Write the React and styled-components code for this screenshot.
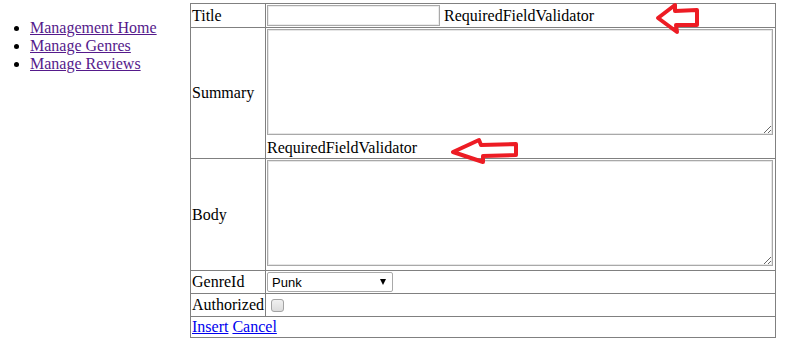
import React from "react";
import styled, { createGlobalStyle } from "styled-components";

const Global = createGlobalStyle`
  html, body { margin: 0; padding: 0; background: #fff; }
  body { font-family: "Liberation Serif", "Times New Roman", serif; font-size: 16px; color: #000; }
`;

const Page = styled.div`
  position: relative;
  display: flex;
  align-items: flex-start;
  padding-top: 3px;
  width: 785px;
  height: 346px;
`;

const Nav = styled.ul`
  width: 160px;
  margin: 16px 0 0;
  padding-left: 30px;
  line-height: 18px;
  list-style: disc;
`;

const NavLink = styled.a`
  color: #551a8b;
  text-decoration: underline;
`;

const Form = styled.table`
  border-collapse: collapse;
  border: 1px solid #808080;
  width: 586px;
`;

const Cell = styled.td`
  border: 1px solid #808080;
  padding: 1px;
  vertical-align: middle;
  line-height: 18px;
  width: ${(p) => (p.$label ? "72px" : "auto")};
`;

const Line = styled.div`
  display: flex;
  align-items: center;
  gap: ${(p) => p.$gap || 0}px;
  height: ${(p) => p.$h}px;
`;

const TextBox = styled.input`
  box-sizing: border-box;
  width: 173px;
  height: 21px;
  margin: 0;
  border: 1px solid #a9a9a9;
  box-shadow: inset 0 0 0 1px #ececec;
  font: 13px "Liberation Sans", Arial, sans-serif;
`;

const Area = styled.textarea`
  display: block;
  box-sizing: border-box;
  width: 506px;
  height: 106px;
  margin: 0 0 ${(p) => p.$after}px;
  border: 1px solid #a9a9a9;
  box-shadow: inset 0 0 0 1px #e6e6e6;
  font: 13px "Liberation Mono", monospace;
`;

const Validator = styled.span`
  display: block;
  line-height: 18px;
`;

const SelectWrap = styled.span`
  position: relative;
  display: inline-block;
  &::after {
    content: "";
    position: absolute;
    right: 7px;
    top: 7px;
    border-left: 3.5px solid transparent;
    border-right: 3.5px solid transparent;
    border-top: 6px solid #000;
    pointer-events: none;
  }
`;

const Select = styled.select`
  appearance: none;
  -webkit-appearance: none;
  box-sizing: border-box;
  width: 126px;
  height: 20px;
  margin: 0;
  padding: 0 0 0 4px;
  border: 1px solid #a9a9a9;
  border-radius: 2px;
  background: #fff;
  font: 13px "Liberation Sans", Arial, sans-serif;
  color: #000;
`;

const Check = styled.input`
  appearance: none;
  -webkit-appearance: none;
  width: 13px;
  height: 13px;
  margin: 3px 3px 3px 4px;
  border: 1px solid #a3a3a3;
  border-radius: 3px;
  background: linear-gradient(#f0f0f0, #dcdcdc);
`;

const Action = styled.a`
  color: #0000ee;
  text-decoration: underline;
`;

const Marker = styled.svg`
  position: absolute;
  left: ${(p) => p.$left}px;
  top: ${(p) => p.$top}px;
  overflow: visible;
  pointer-events: none;
  polygon {
    fill: none;
    stroke: #ed1c24;
    stroke-width: 4;
    stroke-linejoin: round;
  }
`;

export default function App() {
  return (
    <>
      <Global />
      <Page>
        <Nav>
          <li><NavLink href="#">Management Home</NavLink></li>
          <li><NavLink href="#">Manage Genres</NavLink></li>
          <li><NavLink href="#">Manage Reviews</NavLink></li>
        </Nav>
        <Form>
          <tbody>
            <tr>
              <Cell $label>Title</Cell>
              <Cell>
                <Line $h={21} $gap={4}>
                  <TextBox type="text" />
                  <span>RequiredFieldValidator</span>
                </Line>
              </Cell>
            </tr>
            <tr>
              <Cell $label>Summary</Cell>
              <Cell>
                <Area $after={4} />
                <Validator>RequiredFieldValidator</Validator>
              </Cell>
            </tr>
            <tr>
              <Cell $label>Body</Cell>
              <Cell>
                <Area $after={3} />
              </Cell>
            </tr>
            <tr>
              <Cell $label>GenreId</Cell>
              <Cell>
                <Line $h={20}>
                  <SelectWrap>
                    <Select defaultValue="Punk">
                      <option>Punk</option>
                      <option>Rock</option>
                      <option>Jazz</option>
                    </Select>
                  </SelectWrap>
                </Line>
              </Cell>
            </tr>
            <tr>
              <Cell $label>Authorized</Cell>
              <Cell>
                <Line $h={20}>
                  <Check type="checkbox" />
                </Line>
              </Cell>
            </tr>
            <tr>
              <Cell colSpan={2}>
                <Line $h={18} $gap={4}>
                  <Action href="#">Insert</Action>
                  <Action href="#">Cancel</Action>
                </Line>
              </Cell>
            </tr>
          </tbody>
        </Form>
        <Marker $left={654} $top={2} width="46" height="33" viewBox="0 0 46 33">
          <polygon points="4,16 21,3 21,9 43,8 43,23 22,23 23,30" />
        </Marker>
        <Marker $left={449} $top={137} width="72" height="29" viewBox="0 0 72 29">
          <polygon points="4,15 30,3 32,8 67,7 67,18 34,19 34,25" />
        </Marker>
      </Page>
    </>
  );
}
